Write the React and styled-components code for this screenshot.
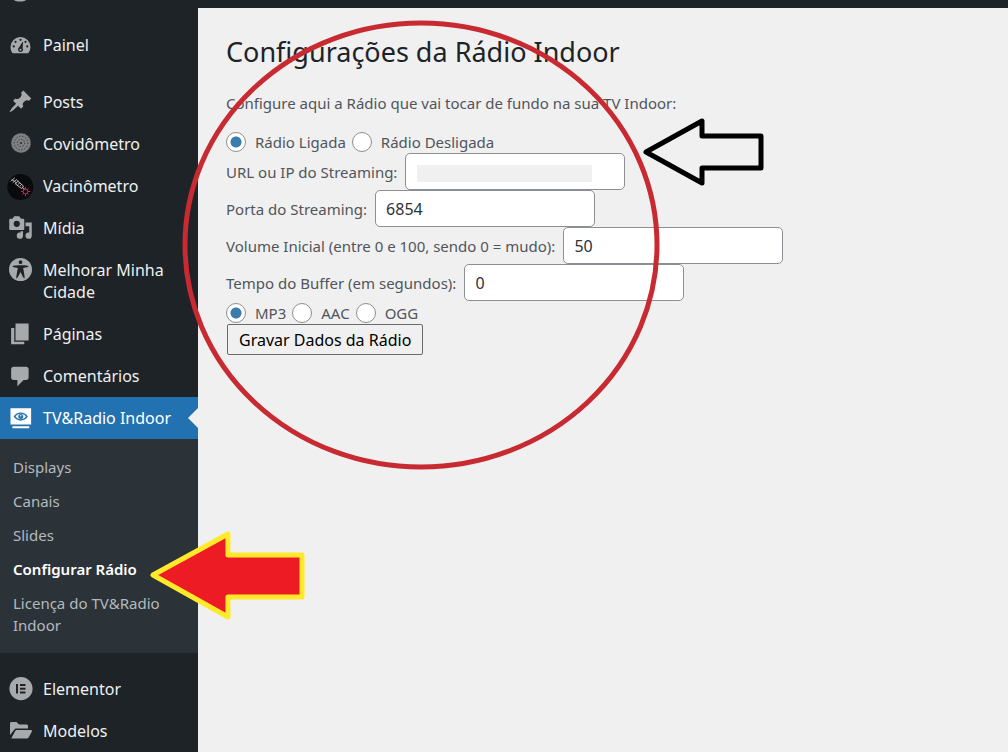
import { useState } from "react";
import styled, { createGlobalStyle, css } from "styled-components";

const GlobalStyle = createGlobalStyle`
  * {
    box-sizing: border-box;
  }

  body {
    margin: 0;
    background: #f0f0f0;
    font-family: "Segoe UI", "Noto Sans", "Open Sans", sans-serif;
    font-size: 15px;
    color: #50555b;
  }
`;

const Page = styled.div`
  position: relative;
  display: flex;
  flex-direction: column;
  min-height: 100vh;
  overflow: hidden;
`;

const AdminBar = styled.header`
  height: 8px;
  padding-left: 14px;
  background: #1d2327;

  & svg {
    display: block;
  }
`;

const Body = styled.div`
  display: flex;
  flex: 1;
`;

const Sidebar = styled.nav`
  flex: none;
  width: 198px;
  padding-top: 16px;
  background: #1d2327;
`;

const Menu = styled.ul`
  margin: 0;
  padding: 0;
  list-style: none;
`;

const Separator = styled.li`
  height: 15px;
`;

const MenuLink = styled.a`
  position: relative;
  display: flex;
  gap: 10px;
  padding: 10px 0 10px 8px;
  font-size: 16px;
  line-height: 22px;
  color: ${({ $active }) => ($active ? "#fff" : "#f0f0f1")};
  background: ${({ $active }) => ($active ? "#2271b1" : "transparent")};
  text-decoration: none;

  & svg {
    flex: none;
    width: 25px;
    height: 25px;
    margin: -2px 0;
    fill: ${({ $active }) => ($active ? "#fff" : "#a7aaad")};
  }

  ${({ $active }) =>
    $active &&
    css`
      &::after {
        content: "";
        position: absolute;
        right: 0;
        top: 11px;
        border: 10px solid transparent;
        border-left: none;
        border-right-color: #f0f0f0;
      }
    `}
`;

const SubMenu = styled.ul`
  margin: 0;
  padding: 11px 0;
  list-style: none;
  background: #2c3338;
`;

const SubLink = styled.a`
  display: block;
  padding: 6px 13px;
  font-size: 15px;
  line-height: 22px;
  font-weight: ${({ $current }) => ($current ? 600 : 400)};
  color: ${({ $current }) => ($current ? "#fff" : "#b4b9be")};
  text-decoration: none;
`;

const Content = styled.main`
  flex: 1;
  min-width: 0;
  padding: 24px 28px;
`;

const Title = styled.h1`
  margin: 0;
  font-size: 27px;
  font-weight: 400;
  line-height: 40px;
  color: #1d2327;
`;

const Intro = styled.p`
  margin: 19px 0 16px;
  line-height: 24px;
`;

const RadioRow = styled.div`
  display: flex;
  gap: 6px;
  height: ${({ $height }) => $height}px;
`;

const RadioLabel = styled.label`
  display: flex;
  align-items: center;
  gap: 9px;
`;

const Radio = styled.input`
  appearance: none;
  flex: none;
  width: 20px;
  height: 20px;
  margin: 0;
  border: 1px solid #8c8f94;
  border-radius: 50%;
  background: #fff;

  &:checked {
    background: radial-gradient(circle, #3a7cab 5px, #fff 6px);
  }
`;

const FieldRow = styled.div`
  display: flex;
  align-items: center;
  gap: 8px;
  height: 37px;
`;

const FieldBox = styled.div`
  position: relative;
  height: 37px;
`;

const Field = styled.input`
  width: 220px;
  height: 37px;
  padding: 0 10px;
  border: 1px solid #8c8f94;
  border-radius: 5px;
  background: #fff;
  color: #2c3338;
  font-family: inherit;
  font-size: 16px;
`;

const Redaction = styled.span`
  position: absolute;
  left: 12px;
  top: 12px;
  width: 175px;
  height: 17px;
  background: #f0f0f0;
`;

const SaveButton = styled.button`
  display: block;
  height: 31px;
  margin-left: 1px;
  padding: 0 11px;
  border: 1px solid #6b6b6b;
  border-radius: 2px;
  background: #f0f0f0;
  color: #000;
  font-family: inherit;
  font-size: 16px;
`;

const Marks = styled.svg`
  position: absolute;
  left: 0;
  top: 0;
  pointer-events: none;
`;

const DashboardIcon = () => (
  <svg viewBox="0 0 20 20">
    <path
      fillRule="evenodd"
      d="M3.76 17h12.48A7.94 7.94 0 0 0 18 12a8 8 0 0 0-16 0c0 1.9.66 3.65 1.76 5zM10 5.3a.9.9 0 1 1 0 1.8.9.9 0 0 1 0-1.8zM6 6.9a.9.9 0 1 1 0 1.8.9.9 0 0 1 0-1.8zM14 6.9a.9.9 0 1 1 0 1.8.9.9 0 0 1 0-1.8zM4.6 10.6a.9.9 0 1 1 0 1.8.9.9 0 0 1 0-1.8zM15.4 10.6a.9.9 0 1 1 0 1.8.9.9 0 0 1 0-1.8zM11.6 8l.5.2-.4 4.7a2 2 0 1 1-2.9-.5zM10 13.3a.8.8 0 1 0 0 1.6.8.8 0 0 0 0-1.6z"
    />
  </svg>
);

const PinIcon = () => (
  <svg viewBox="0 0 20 20">
    <path d="M10.44 3.02l1.82-1.82 6.36 6.35-1.83 1.82c-1.05-.68-2.48-.57-3.41.36l-.75.75c-.92.93-1.04 2.35-.35 3.41l-1.83 1.82-2.41-2.41-2.8 2.79c-.42.42-3.38 2.71-3.8 2.29s1.86-3.39 2.28-3.81l2.79-2.79L4.1 9.36l1.83-1.82c1.05.69 2.48.57 3.4-.36l.75-.75c.93-.92 1.05-2.35.36-3.41z" />
  </svg>
);

const VirusIcon = () => (
  <svg viewBox="0 0 25 25">
    <circle cx="13" cy="12" r="10" style={{ fill: "#7d8184" }} />
    <g fill="none" stroke="#2c3135">
      <circle cx="13" cy="12" r="9.8" strokeDasharray="1 1.4" />
      <circle cx="13" cy="12" r="6.8" strokeDasharray="1.2 1.8" />
      <circle cx="13" cy="12" r="3.6" strokeDasharray="1.2 1.6" />
    </g>
    <circle cx="13" cy="12" r="1" style={{ fill: "#24292d" }} />
  </svg>
);

const SyringeIcon = () => (
  <svg viewBox="0 0 25 25" overflow="visible">
    <circle cx="12.3" cy="14" r="13" style={{ fill: "#090a0c" }} />
    <g fill="none" stroke="#b9b9bb" strokeLinecap="round">
      <path d="M3 8l3.500-3M5 9.500l3.500-3M7.500 10.500l2.500-2.500M4 6.500l4.500 3.500M9 7.500l6.500 5.500-2 2.500-6-4.500M14.500 14.500l2.500 2" />
      <path d="M10 11.500l1.500-1.500M12 13l1.500-1.500" />
    </g>
    <g fill="none" stroke="#b8324c">
      <circle cx="17.5" cy="18.5" r="2.3" />
      <path d="M17.5 14v2M17.5 21v2.4M13 18.5h2M20 18.5h2.4M14.4 15.4l1.5 1.5M20.6 15.4l-1.5 1.5M14.4 21.6l1.5-1.5M20.6 21.6l-1.5-1.5" />
    </g>
  </svg>
);

const MediaIcon = () => (
  <svg viewBox="0 0 20 20">
    <path
      fillRule="evenodd"
      d="M13 11V4c0-.55-.45-1-1-1h-1.67L9 1H5L3.67 3H2c-.55 0-1 .45-1 1v7c0 .55.45 1 1 1h10c.55 0 1-.45 1-1zM7 4.5a2.5 2.5 0 1 1 0 5 2.5 2.5 0 0 1 0-5zM14 6h5v10.5a2.5 2.5 0 1 1-2-2.45V9h-3zM10 14.05V13h2v3.5a2.5 2.5 0 1 1-2-2.45z"
    />
  </svg>
);

const AccessIcon = () => (
  <svg viewBox="0 0 20 20">
    <path
      fillRule="evenodd"
      d="M10 .8a9.2 9.2 0 1 0 0 18.4A9.2 9.2 0 0 0 10 .8zM10 2.6a1.5 1.5 0 1 1 0 3 1.5 1.5 0 0 1 0-3zM3.4 7.36c0-.65 6.6-.76 6.6-.76s6.6.11 6.6.76-4.47 1.4-4.47 1.4 1.69 8.14 1.06 8.38c-.62.24-3.19-5.19-3.19-5.19s-2.56 5.43-3.18 5.19c-.63-.24 1.06-8.38 1.06-8.38S3.4 8.01 3.4 7.36z"
    />
  </svg>
);

const PagesIcon = () => (
  <svg viewBox="0 0 20 20">
    <path d="M6 15.500V2h10.500v13.500zM5 16.500h8V18.500H2.500V5.500H5z" />
  </svg>
);

const CommentIcon = () => (
  <svg viewBox="0 0 20 20">
    <path d="M4.500 3h10c1.100 0 2 .9 2 2v6.500c0 1.100-.9 2-2 2h-2l-5 5v-5h-3c-1.100 0-2-.9-2-2V5c0-1.100.9-2 2-2z" />
  </svg>
);

const TvIcon = () => (
  <svg viewBox="0 0 20 20">
    <path
      fillRule="evenodd"
      d="M2 2.500h16.500v13H2zM4.500 9.200c1.400-2.200 3.400-3.300 5.700-3.300s4.300 1.100 5.700 3.300c-1.400 2.200-3.400 3.300-5.700 3.300s-4.300-1.100-5.700-3.300zM6.100 9.200c1 1.400 2.400 2.200 4.100 2.200s3.100-.8 4.100-2.200c-1-1.400-2.400-2.200-4.100-2.200s-3.100.8-4.100 2.200zM3.500 17h13.500v1.500H3.500z"
    />
    <circle cx="10.2" cy="9.2" r="2" style={{ fill: "#2271b1" }} />
    <circle cx="10.2" cy="8.6" r=".6" />
  </svg>
);

const ElementorIcon = () => (
  <svg viewBox="0 0 25 25">
    <path
      fillRule="evenodd"
      d="M13 1a11.6 11.6 0 1 0 0 23.2A11.6 11.6 0 0 0 13 1zM8 8h2v9.500H8zM12 8h5.500v2H12zM12 11.750h5.500v2H12zM12 15.500h5.500v2H12z"
    />
  </svg>
);

const FolderIcon = () => (
  <svg viewBox="0 0 25 25">
    <path d="M2 17V5.500C2 4.600 2.600 4 3.500 4h5L11 6.500h7.500c.9 0 1.500.6 1.500 1.500v2.500H8.500c-1 0-1.800.5-2.300 1.300z" />
    <path d="M3.200 20.500l4-7.500c.3-.6.900-1 1.600-1H23c.8 0 1.300.8.900 1.500l-3.300 6c-.3.600-.9 1-1.600 1z" />
  </svg>
);

const submenu = ["Displays", "Canais", "Slides", "Configurar Rádio", "Licença do TV&Radio Indoor"];

const MenuItem = ({ icon: Icon, label, active, children }) => (
  <li>
    <MenuLink href="#" $active={active}>
      <Icon />
      <span>{label}</span>
    </MenuLink>
    {children}
  </li>
);

const RadioGroup = ({ name, options, height }) => {
  const [selected, setSelected] = useState(options[0]);
  return (
    <RadioRow $height={height}>
      {options.map((option) => (
        <RadioLabel key={option}>
          <Radio
            type="radio"
            name={name}
            checked={selected === option}
            onChange={() => setSelected(option)}
          />
          {option}
        </RadioLabel>
      ))}
    </RadioRow>
  );
};

const TextField = ({ id, label, value, hidden }) => (
  <FieldRow>
    <label htmlFor={id}>{label}</label>
    <FieldBox>
      <Field id={id} type="text" defaultValue={value} />
      {hidden && <Redaction />}
    </FieldBox>
  </FieldRow>
);

const App = () => (
  <Page>
    <GlobalStyle />
    <AdminBar>
      <svg width="12" height="2">
        <path d="M0 0h12c-2 2-10 2-12 0z" fill="#a7aaad" />
      </svg>
    </AdminBar>
    <Body>
      <Sidebar>
        <Menu>
          <MenuItem icon={DashboardIcon} label="Painel" />
          <Separator />
          <MenuItem icon={PinIcon} label="Posts" />
          <MenuItem icon={VirusIcon} label="Covidômetro" />
          <MenuItem icon={SyringeIcon} label="Vacinômetro" />
          <MenuItem icon={MediaIcon} label="Mídia" />
          <MenuItem icon={AccessIcon} label="Melhorar Minha Cidade" />
          <MenuItem icon={PagesIcon} label="Páginas" />
          <MenuItem icon={CommentIcon} label="Comentários" />
          <MenuItem icon={TvIcon} label="TV&Radio Indoor" active>
            <SubMenu>
              {submenu.map((item) => (
                <li key={item}>
                  <SubLink href="#" $current={item === "Configurar Rádio"}>
                    {item}
                  </SubLink>
                </li>
              ))}
            </SubMenu>
          </MenuItem>
          <Separator />
          <MenuItem icon={ElementorIcon} label="Elementor" />
          <MenuItem icon={FolderIcon} label="Modelos" />
        </Menu>
      </Sidebar>
      <Content>
        <Title>Configurações da Rádio Indoor</Title>
        <Intro>Configure aqui a Rádio que vai tocar de fundo na sua TV Indoor:</Intro>
        <form onSubmit={(e) => e.preventDefault()}>
          <RadioGroup name="status" height={22} options={["Rádio Ligada", "Rádio Desligada"]} />
          <TextField id="url" label="URL ou IP do Streaming:" hidden />
          <TextField id="port" label="Porta do Streaming:" value="6854" />
          <TextField
            id="volume"
            label="Volume Inicial (entre 0 e 100, sendo 0 = mudo):"
            value="50"
          />
          <TextField id="buffer" label="Tempo do Buffer (em segundos):" value="0" />
          <RadioGroup name="format" height={23} options={["MP3", "AAC", "OGG"]} />
          <SaveButton type="submit">Gravar Dados da Rádio</SaveButton>
        </form>
      </Content>
    </Body>
    <Marks width="800" height="640">
      <ellipse cx="421" cy="245" rx="236" ry="222" fill="none" stroke="#c82a32" strokeWidth="5" />
      <path
        d="M646 152L702 121V136H761V168H702V183Z"
        fill="none"
        stroke="#000"
        strokeWidth="5"
        strokeLinejoin="round"
      />
      <path
        d="M153 575L228 534V555H302V597H228V617Z"
        fill="#ed1c24"
        stroke="#ffe92b"
        strokeWidth="5"
        strokeLinejoin="round"
      />
    </Marks>
  </Page>
);

export default App;
